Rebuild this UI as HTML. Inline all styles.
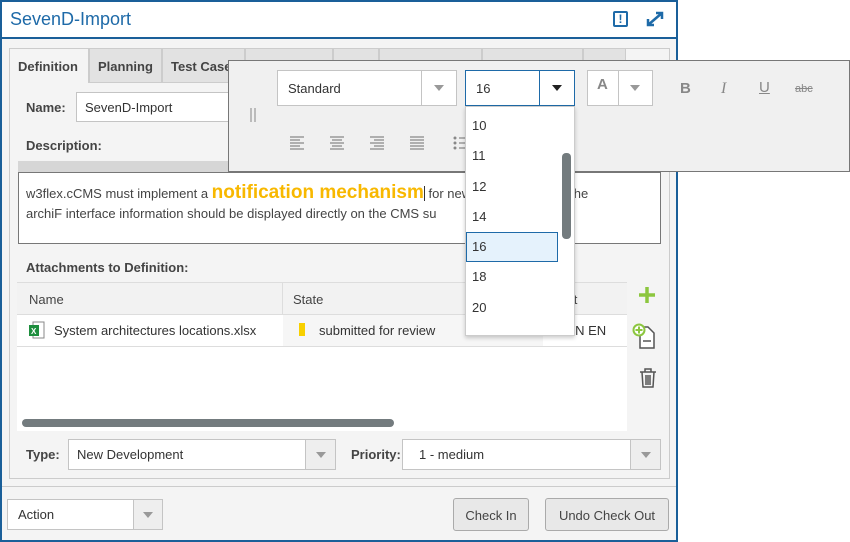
<!DOCTYPE html>
<html><head><style>
*{box-sizing:border-box;margin:0;padding:0}
body{width:850px;height:542px;background:#fff;font-family:"Liberation Sans",sans-serif;font-size:13px;color:#333;position:relative;overflow:hidden}
.a{position:absolute}
.lbl{font-weight:bold;color:#444;font-size:13px}
.box{background:#fff;border:1px solid #c4c4c4}
.arr{width:0;height:0;border-left:5px solid transparent;border-right:5px solid transparent;border-top:6px solid #999}
.tab{position:absolute;top:48px;height:35px;border:1px solid #ccc;background:#e2e2e2;font-weight:bold;font-size:13px;color:#444;padding:10px 0 0 8px}
</style></head><body>
<div class="a" style="left:0;top:0;width:678px;height:542px;border:2px solid #1a5f99;background:#f4f4f4"></div>
<div class="a" style="left:2px;top:2px;width:674px;height:37px;background:#fff;border-bottom:2px solid #1a5f99"></div>
<div class="a" style="left:10px;top:9px;font-size:18px;color:#1e6aa8">SevenD-Import</div>
<div class="a" style="left:613px;top:11px;width:15px;height:16px;border:2px solid #1e6aa8;border-radius:2px;color:#1e6aa8;font-weight:bold;font-size:12px;text-align:center;line-height:12px">!</div>
<svg class="a" style="left:645px;top:10px" width="20" height="18" viewBox="0 0 20 18"><path d="M3 15L17 3M11 3h6v6M3 9v6h6" stroke="#1e6aa8" stroke-width="2.5" fill="none"/></svg>

<div class="a" style="left:9px;top:48px;width:661px;height:431px;border:1px solid #ccc;background:#f4f4f4"></div>
<div class="tab" style="left:9px;width:80px;background:#f4f4f4;border-bottom:none">Definition</div>
<div class="tab" style="left:89px;width:73px">Planning</div>
<div class="tab" style="left:162px;width:83px">Test Case</div>
<div class="tab" style="left:245px;width:88px"></div>
<div class="tab" style="left:333px;width:46px"></div>
<div class="tab" style="left:379px;width:103px"></div>
<div class="tab" style="left:482px;width:101px"></div>
<div class="tab" style="left:583px;width:43px"></div>

<div class="a lbl" style="left:26px;top:100px">Name:</div>
<div class="a box" style="left:76px;top:92px;width:200px;height:30px;padding:7px 8px">SevenD-Import</div>
<div class="a lbl" style="left:26px;top:138px">Description:</div>
<div class="a" style="left:18px;top:161px;width:643px;height:12px;background:#d6d6d6"></div>
<div class="a" style="left:18px;top:172px;width:643px;height:72px;background:#fff;border:1px solid #777"></div>
<div class="a" style="left:26px;top:183px;color:#444;white-space:nowrap;line-height:20px">w3flex.cCMS must implement a <span style="color:#f8b800;font-weight:bold;font-size:19px">notification mechanism</span><span style="border-left:1px solid #333"></span> for new data arriving via the<br>archiF interface information should be displayed directly on the CMS su</div>

<div class="a lbl" style="left:26px;top:260px">Attachments to Definition:</div>
<div class="a" style="left:17px;top:282px;width:610px;height:149px;background:#fff"></div>
<div class="a" style="left:17px;top:282px;width:610px;height:33px;background:#f2f2f2;border-top:1px solid #ddd;border-bottom:1px solid #ddd"></div>
<div class="a" style="left:282px;top:283px;width:1px;height:31px;background:#ddd"></div>
<div class="a" style="left:29px;top:292px;color:#444">Name</div>
<div class="a" style="left:293px;top:292px;color:#444">State</div>
<div class="a" style="left:560px;top:292px;color:#444">ect</div>
<div class="a" style="left:17px;top:346px;width:610px;height:1px;background:#ddd"></div>
<div class="a" style="left:283px;top:315px;width:260px;height:31px;background:#f6f6f6"></div>
<svg class="a" style="left:28px;top:321px" width="18" height="19"><rect x="5" y="1" width="11" height="16" fill="#fff" stroke="#888"/><rect x="1" y="4" width="10" height="11" fill="#1e8e3e"/><text x="3" y="13" font-size="8" fill="#fff" font-family="Liberation Sans" font-weight="bold">X</text></svg>
<div class="a" style="left:54px;top:323px;color:#333">System architectures locations.xlsx</div>
<div class="a" style="left:299px;top:323px;width:6px;height:13px;background:#f8d000"></div>
<div class="a" style="left:319px;top:323px;color:#333">submitted for review</div>
<div class="a" style="left:565px;top:323px;color:#333">ON EN</div>
<div class="a" style="left:22px;top:419px;width:372px;height:8px;border-radius:4px;background:#737b7e"></div>
<svg class="a" style="left:638px;top:286px" width="18" height="18"><path d="M9 1v16M1 9h16" stroke="#8cc63f" stroke-width="3.5"/></svg>
<svg class="a" style="left:632px;top:322px" width="26" height="28"><path d="M8 5h8l6 6v15H8z" fill="#fff" stroke="#555" stroke-width="1.5"/><path d="M11 19h8" stroke="#555" stroke-width="1.5"/><circle cx="7" cy="8" r="5.5" fill="#fff" stroke="#8cc63f" stroke-width="2"/><path d="M7 4.5v7M3.5 8h7" stroke="#8cc63f" stroke-width="2"/></svg>
<svg class="a" style="left:638px;top:367px" width="20" height="22"><path d="M2 5h16M7 5V2h6v3M4 5l1 15h10l1-15M8 8v10M10 8v10M12 8v10" stroke="#555" stroke-width="1.5" fill="none"/></svg>

<div class="a lbl" style="left:26px;top:447px">Type:</div>
<div class="a box" style="left:68px;top:439px;width:268px;height:31px;padding:7px 8px">New Development</div>
<div class="a" style="left:305px;top:440px;width:30px;height:29px;background:#eee;border-left:1px solid #c4c4c4"><div class="arr" style="margin:12px 0 0 10px"></div></div>
<div class="a lbl" style="left:351px;top:447px">Priority:</div>
<div class="a box" style="left:402px;top:439px;width:259px;height:31px;padding:7px 16px">1 - medium</div>
<div class="a" style="left:630px;top:440px;width:30px;height:29px;background:#eee;border-left:1px solid #c4c4c4"><div class="arr" style="margin:12px 0 0 10px"></div></div>

<div class="a" style="left:2px;top:486px;width:674px;height:1px;background:#ccc"></div>
<div class="a box" style="left:7px;top:499px;width:156px;height:31px;padding:7px 10px">Action</div>
<div class="a" style="left:133px;top:500px;width:29px;height:29px;background:#eee;border-left:1px solid #c4c4c4"><div class="arr" style="margin:12px 0 0 9px"></div></div>
<div class="a" style="left:453px;top:498px;width:76px;height:33px;border:1px solid #aaa;border-radius:3px;background:#e8e8e8;text-align:center;padding-top:9px;color:#444">Check In</div>
<div class="a" style="left:545px;top:498px;width:124px;height:33px;border:1px solid #aaa;border-radius:3px;background:#e8e8e8;text-align:center;padding-top:9px;color:#444">Undo Check Out</div>

<!-- toolbar -->
<div class="a" style="left:228px;top:60px;width:622px;height:112px;background:#f0f0f0;border:1px solid #777"></div>
<div class="a" style="left:250px;top:108px;width:2px;height:14px;background:#bbb"></div>
<div class="a" style="left:254px;top:108px;width:2px;height:14px;background:#bbb"></div>
<div class="a box" style="left:277px;top:70px;width:180px;height:36px;padding:10px 10px;color:#333">Standard</div>
<div class="a" style="left:421px;top:71px;width:1px;height:34px;background:#c4c4c4"></div>
<div class="arr a" style="left:434px;top:85px"></div>
<div class="a" style="left:465px;top:70px;width:110px;height:36px;background:#fff;border:1px solid #1e6aa8;padding:10px 10px">16</div>
<div class="a" style="left:539px;top:71px;width:1px;height:34px;background:#1e6aa8"></div>
<div class="a" style="left:552px;top:85px;border-left:5px solid transparent;border-right:5px solid transparent;border-top:6px solid #222"></div>
<div class="a box" style="left:587px;top:70px;width:66px;height:36px"></div>
<div class="a" style="left:618px;top:71px;width:1px;height:34px;background:#c4c4c4"></div>
<div class="a" style="left:597px;top:76px;font-weight:bold;font-size:15px;color:#888">A</div>
<div class="arr a" style="left:630px;top:85px"></div>
<div class="a" style="left:680px;top:80px;font-weight:bold;font-size:15px;color:#888">B</div>
<div class="a" style="left:721px;top:80px;font-style:italic;font-family:'Liberation Serif',serif;font-size:16px;color:#888">I</div>
<div class="a" style="left:759px;top:79px;text-decoration:underline;font-size:15px;color:#888">U</div>
<div class="a" style="left:795px;top:83px;text-decoration:line-through;font-size:11px;color:#888">abc</div>
<svg class="a" style="left:289px;top:135px" width="200" height="16"><g stroke="#888" stroke-width="1.2"><path d="M1 2h14M1 5h10M1 8h14M1 11h10M1 14h14"/><path d="M41 2h14M43 5h10M41 8h14M43 11h10M41 14h14"/><path d="M81 2h14M85 5h10M81 8h14M85 11h10M81 14h14"/><path d="M121 2h14M121 5h14M121 8h14M121 11h14M121 14h14"/><path d="M170 3h10M170 8h10M170 13h10"/></g><g fill="#888"><circle cx="166" cy="3" r="1.5"/><circle cx="166" cy="8" r="1.5"/><circle cx="166" cy="13" r="1.5"/></g></svg>

<!-- dropdown -->
<div class="a" style="left:465px;top:106px;width:110px;height:230px;background:#fff;border:1px solid #ccc;box-shadow:0 2px 4px rgba(0,0,0,.2)"></div>
<div class="a" style="left:466px;top:232px;width:92px;height:30px;background:#e5f2fc;border:1px solid #1e6aa8"></div>
<div class="a" style="left:562px;top:153px;width:9px;height:86px;border-radius:4px;background:#737b7e"></div>
<div class="a" style="left:472px;top:111px;line-height:30.3px;color:#333">10<br>11<br>12<br>14<br>16<br>18<br>20</div>
</body></html>
